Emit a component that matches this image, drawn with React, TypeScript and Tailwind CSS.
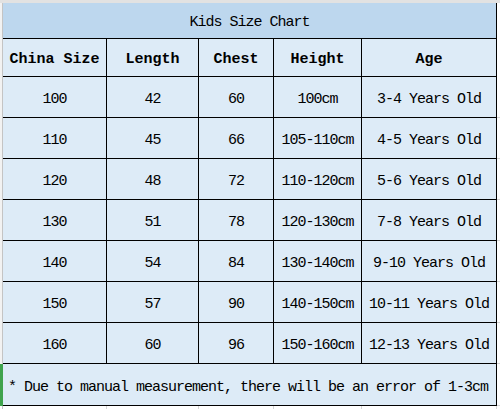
const rows = [
  ["100", "42", "60", "100cm", "3-4 Years Old"],
  ["110", "45", "66", "105-110cm", "4-5 Years Old"],
  ["120", "48", "72", "110-120cm", "5-6 Years Old"],
  ["130", "51", "78", "120-130cm", "7-8 Years Old"],
  ["140", "54", "84", "130-140cm", "9-10 Years Old"],
  ["150", "57", "90", "140-150cm", "10-11 Years Old"],
  ["160", "60", "96", "150-160cm", "12-13 Years Old"],
];

const heads = ["China Size", "Length", "Chest", "Height", "Age"];

const cols = "grid grid-cols-[104px_92px_75px_88px_135px]";

export default function App() {
  return (
    <div className="w-[500px] h-[409px] bg-white overflow-hidden font-['Liberation_Mono',monospace] text-black text-[15px] tracking-[-1px]">
      {/* excel gridline strip */}
      <div className="h-[3px] bg-[#e2e2e2]" />

      {/* title */}
      <div className="flex">
        <div className="w-[3px] border-r border-[#c4c4c4] bg-[#f2f2f2]" />
        <div className="w-[494px] h-[36px] bg-[#bdd7ee] border-b border-r border-black flex items-center justify-center pt-[5px]">
          Kids Size Chart
        </div>
        <div className="w-[3px]" />
      </div>

      {/* header */}
      <div className="flex">
        <div className="w-[3px] border-r border-[#c4c4c4] bg-[#f2f2f2]" />
        <div className={`${cols} w-[494px] h-[38px] bg-[#ddebf7] border-b border-black`}>
          {heads.map((h) => (
            <div key={h} className="border-r border-black flex items-center justify-center font-bold tracking-[0px] pt-[5px]">
              {h}
            </div>
          ))}
        </div>
        <div className="w-[3px]" />
      </div>

      {rows.map((r) => (
        <div key={r[0]} className="flex">
          <div className="w-[3px] border-r border-[#c4c4c4] bg-[#f2f2f2]" />
          <div className={`${cols} w-[494px] h-[41px] bg-[#ddebf7] border-b border-black`}>
            {r.map((c, i) => (
              <div key={i} className="border-r border-black flex items-center justify-center pt-[7px]">
                {c}
              </div>
            ))}
          </div>
          <div className="w-[3px] border-b border-[#d6d6d6]" />
        </div>
      ))}

      {/* footer note */}
      <div className="flex">
        <div className="w-[3px] bg-[#3fa34d]" />
        <div className="w-[494px] h-[42px] bg-[#ddebf7] border-b border-r border-black flex items-center pl-[5px] pt-[8px]">
          * Due to manual measurement, there will be an error of 1-3cm
        </div>
        <div className="w-[3px] border-b border-[#d6d6d6]" />
      </div>

      <div className="flex h-[4px]">
        <div className="w-[3px] border-r border-[#c4c4c4]" />
        <div className={`${cols} w-[494px]`}>
          {heads.map((h) => (
            <div key={h} className="border-r border-[#d6d6d6]" />
          ))}
        </div>
      </div>
    </div>
  );
}
